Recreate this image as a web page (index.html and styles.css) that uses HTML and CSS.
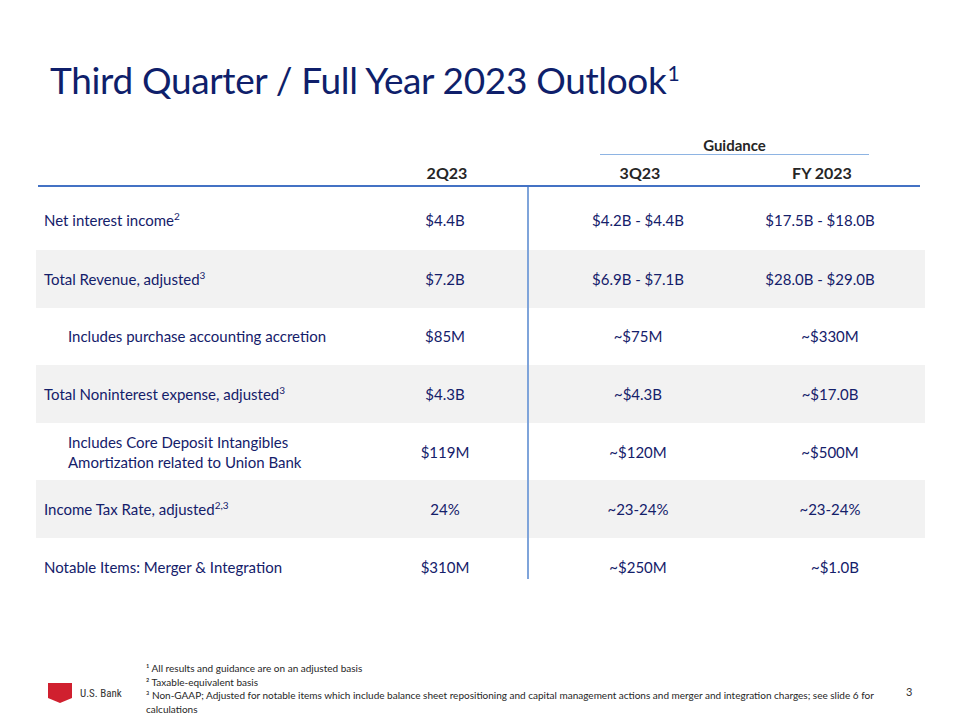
FILE: index.html
```html
<!DOCTYPE html>
<html>
<head>
<meta charset="utf-8">
<link rel="stylesheet" href="styles.css">
</head>
<body>
<div class="slide">
  <h1 class="title">Third Quarter / Full Year 2023 Outlook<sup>1</sup></h1>
  <div class="table">
    <div class="guidance">Guidance</div>
    <div class="row head">
      <div></div>
      <div class="c2">2Q23</div>
      <div class="c3">3Q23</div>
      <div class="c4">FY 2023</div>
    </div>
    <div class="body">
      <div class="row first">
        <div class="label">Net interest income<sup>2</sup></div>
        <div class="c2">$4.4B</div>
        <div class="c3">$4.2B - $4.4B</div>
        <div class="c4">$17.5B - $18.0B</div>
      </div>
      <div class="row band">
        <div class="label">Total Revenue, adjusted<sup>3</sup></div>
        <div class="c2">$7.2B</div>
        <div class="c3">$6.9B - $7.1B</div>
        <div class="c4">$28.0B - $29.0B</div>
      </div>
      <div class="row">
        <div class="label indent">Includes purchase accounting accretion</div>
        <div class="c2">$85M</div>
        <div class="c3">~$75M</div>
        <div class="c4 shift">~$330M</div>
      </div>
      <div class="row band">
        <div class="label">Total Noninterest expense, adjusted<sup>3</sup></div>
        <div class="c2">$4.3B</div>
        <div class="c3">~$4.3B</div>
        <div class="c4 shift">~$17.0B</div>
      </div>
      <div class="row">
        <div class="label indent">Includes Core Deposit Intangibles<br>Amortization related to Union Bank</div>
        <div class="c2">$119M</div>
        <div class="c3">~$120M</div>
        <div class="c4 shift">~$500M</div>
      </div>
      <div class="row band">
        <div class="label">Income Tax Rate, adjusted<sup>2,3</sup></div>
        <div class="c2">24%</div>
        <div class="c3">~23-24%</div>
        <div class="c4 shift">~23-24%</div>
      </div>
      <div class="row">
        <div class="label">Notable Items: Merger &amp; Integration</div>
        <div class="c2">$310M</div>
        <div class="c3">~$250M</div>
        <div class="c4 shift2">~$1.0B</div>
      </div>
    </div>
  </div>
  <div class="footer">
    <div class="brand">
      <svg class="shield" width="24" height="20" viewBox="0 0 24 20"><path d="M0 0 H24 V15 L12 20 L0 15 Z" fill="#d0202f"/></svg>
      <span class="brand-name">U.S. Bank</span>
    </div>
    <div class="notes">
      <div>¹ All results and guidance are on an adjusted basis</div>
      <div>² Taxable-equivalent basis</div>
      <div>³ Non-GAAP; Adjusted for notable items which include balance sheet repositioning and capital management actions and merger and integration charges; see slide 6 for calculations</div>
    </div>
    <div class="page">3</div>
  </div>
</div>
</body>
</html>
```

FILE: styles.css
```css
* { box-sizing: border-box; }
html, body { margin: 0; padding: 0; background: #fff; }
body { font-family: Lato, "Open Sans", sans-serif; }
.slide {
  width: 960px;
  height: 720px;
  position: relative;
  display: flex;
  flex-direction: column;
  overflow: hidden;
}
.title {
  margin: 56px 0 0 50px;
  font-weight: 400;
  font-size: 37px;
  line-height: 48px;
  height: 48px;
  color: #0f1f6b;
  letter-spacing: -0.35px;
}
.title sup {
  font-size: 21px;
  vertical-align: 13px;
  line-height: 0;
  margin-left: 1px;
}
.table {
  margin: 33px 0 0 36px;
  width: 889px;
}
.guidance {
  margin-left: 564px;
  width: 269px;
  text-align: center;
  font-weight: 700;
  font-size: 15px;
  line-height: 16px;
  height: 17.5px;
  color: #262626;
  border-bottom: 1.5px solid #8eb4e3;
}
.row {
  display: grid;
  grid-template-columns: 327px 164px 222px 142px 34px;
  align-items: center;
  height: 57.6px;
  font-size: 15px;
  color: #14206a;
}
.row > div { text-align: center; }
.row > .label { text-align: left; padding-left: 8px; line-height: 20px; }
.row > .indent { padding-left: 32px; }
.head {
  height: 32.5px;
  padding-top: 4.5px;
  margin: 0 5px 0 2px;
  border-bottom: 2px solid #4472c4;
  font-weight: 700;
  font-size: 16px;
  color: #262626;
}
.body { position: relative; }
.body::before {
  content: "";
  position: absolute;
  left: 491px;
  top: 0;
  width: 1.5px;
  height: 392px;
  background: #7fa4da;
}
.row.first { height: 63px; padding-top: 3px; }
.row.band { background: #f2f2f2; }
.row sup { font-size: 10px; line-height: 0; vertical-align: 6px; }
.shift { padding-left: 20px; }
.shift2 { padding-left: 30px; }
.footer {
  position: absolute;
  left: 0;
  top: 662px;
  width: 960px;
  display: flex;
  align-items: flex-start;
}
.brand {
  width: 146px;
  padding-left: 48px;
  margin-top: 21px;
  display: flex;
  align-items: center;
  gap: 8px;
}
.shield { display: block; }
.brand-name {
  font-family: "Liberation Sans Narrow", "Roboto Condensed", Roboto, sans-serif;
  font-size: 11px;
  color: #333;
}
.notes {
  width: 740px;
  font-size: 10px;
  line-height: 13.5px;
  color: #262626;
}
.page {
  margin-left: 20px;
  margin-top: 23px;
  font-size: 11px;
  color: #333;
}
```
